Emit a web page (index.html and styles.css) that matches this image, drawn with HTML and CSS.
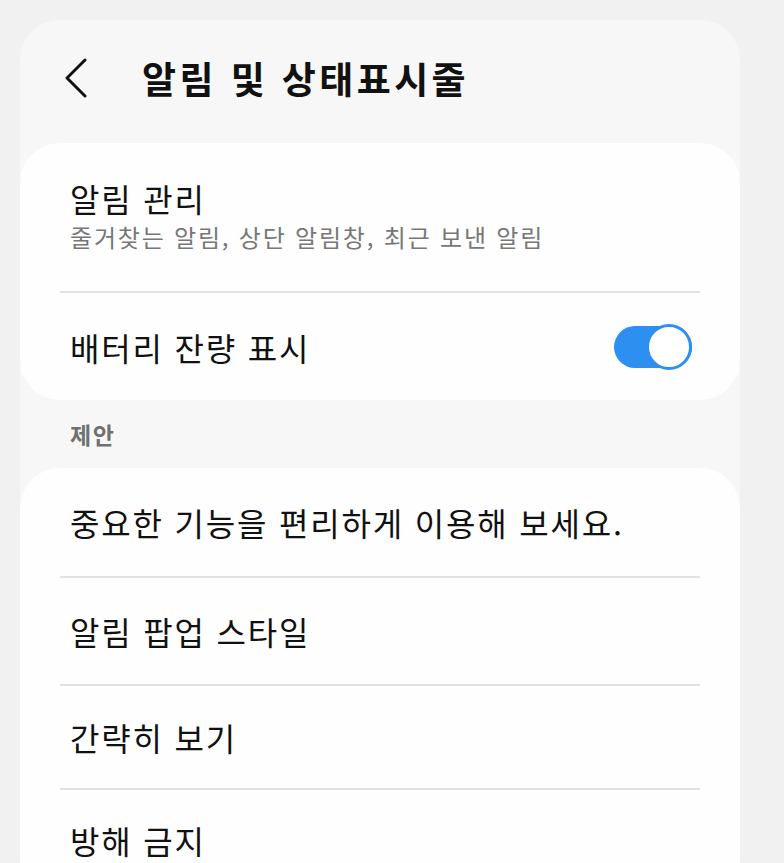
FILE: index.html
```html
<!DOCTYPE html>
<html lang="ko">
<head>
<meta charset="utf-8">
<link rel="stylesheet" href="styles.css">
</head>
<body>
<div class="panel">
  <header class="header">
    <svg class="back" width="26" height="40" viewBox="0 0 26 40"><polyline points="21,2 3,20 21,38" fill="none" stroke="#111" stroke-width="3" stroke-linecap="round" stroke-linejoin="round"/></svg>
    <h1 class="title">알림 및 상태표시줄</h1>
  </header>
  <section class="card">
    <div class="row row-tall">
      <div class="row-title">알림 관리</div>
      <div class="row-sub">줄거찾는 알림, 상단 알림창, 최근 보낸 알림</div>
    </div>
    <div class="divider"></div>
    <div class="row row-switch">
      <div class="row-title">배터리 잔량 표시</div>
      <div class="switch"><div class="thumb"></div></div>
    </div>
  </section>
  <div class="section-label">제안</div>
  <section class="card">
    <div class="row"><div class="row-title">중요한 기능을 편리하게 이용해 보세요.</div></div>
    <div class="divider"></div>
    <div class="row row-mid"><div class="row-title">알림 팝업 스타일</div></div>
    <div class="divider"></div>
    <div class="row row-short"><div class="row-title">간략히 보기</div></div>
    <div class="divider"></div>
    <div class="row row-last"><div class="row-title">방해 금지</div></div>
  </section>
</div>
</body>
</html>
```
FILE: styles.css
```css
html, body {
  margin: 0;
  padding: 0;
  background: #f1f1f1;
  font-family: "Noto Sans CJK KR", "Noto Sans", sans-serif;
  color: #111;
  overflow: hidden;
}
.panel {
  margin: 20px 44px 0 20px;
  background: #f7f7f7;
  border-radius: 40px 40px 0 0;
  min-height: 900px;
}
.header {
  height: 123px;
  display: flex;
  align-items: center;
  padding-left: 44px;
  box-sizing: border-box;
  padding-bottom: 8px;
}
.back {
  display: block;
}
.title {
  margin: 0 0 0 52px;
  font-size: 37px;
  font-weight: 700;
  letter-spacing: 3.4px;
}
.card {
  background: #fefefe;
  border-radius: 40px;
  display: flex;
  flex-direction: column;
}
.row {
  height: 108px;
  padding: 0 50px;
  display: flex;
  flex-direction: column;
  justify-content: center;
}
.row-tall {
  height: 148px;
  padding-bottom: 4px;
  box-sizing: border-box;
}
.row-mid {
  height: 106px;
}
.row-short {
  height: 102px;
}
.row-last {
  justify-content: flex-start;
  padding-top: 30px;
  box-sizing: border-box;
}
.row-switch {
  height: 107px;
  flex-direction: row;
  align-items: center;
  justify-content: space-between;
}
.row-title {
  font-size: 32px;
  line-height: 40px;
  letter-spacing: 1.8px;
}
.row-sub {
  margin-top: 4px;
  font-size: 24px;
  line-height: 30px;
  color: #777;
  letter-spacing: 1.8px;
}
.divider {
  height: 2px;
  background: #e2e2e2;
  margin: 0 40px;
}
.switch {
  position: relative;
  width: 78px;
  height: 42px;
  border-radius: 21px;
  background: #2d8ff0;
  margin-right: -2px;
}
.thumb {
  position: absolute;
  right: 0;
  top: -2px;
  width: 40px;
  height: 40px;
  border-radius: 50%;
  background: #fff;
  border: 3px solid #2d8ff0;
}
.section-label {
  height: 68px;
  padding-left: 50px;
  display: flex;
  align-items: center;
  font-size: 23px;
  font-weight: 700;
  color: #707070;
  letter-spacing: 1.5px;
}
```
